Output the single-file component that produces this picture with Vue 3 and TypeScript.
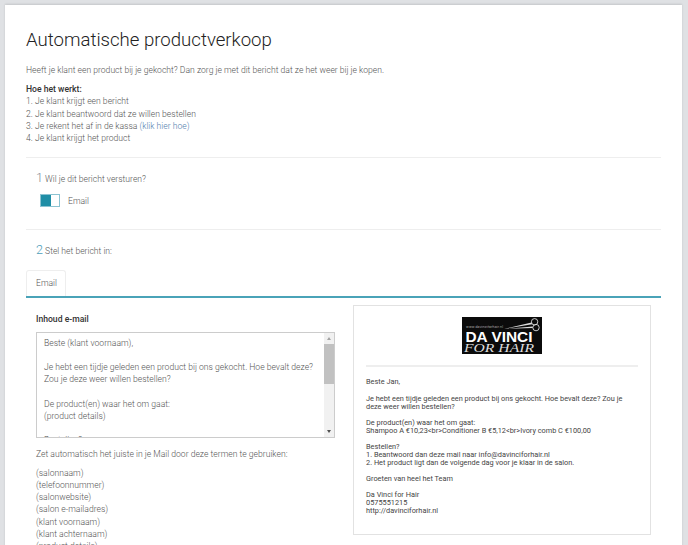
<script setup lang="ts">
const steps = [
  '1. Je klant krijgt een bericht',
  '2. Je klant beantwoord dat ze willen bestellen',
]
const terms = [
  '(salonnaam)',
  '(telefoonnummer)',
  '(salonwebsite)',
  '(salon e-mailadres)',
  '(klant voornaam)',
  '(klant achternaam)',
  '(product details)',
]
const template = `Beste (klant voornaam),

Je hebt een tijdje geleden een product bij ons gekocht. Hoe bevalt deze?
Zou je deze weer willen bestellen?

De product(en) waar het om gaat:
(product details)

Bestellen?`
const mail = `Beste Jan,

Je hebt een tijdje geleden een product bij ons gekocht. Hoe bevalt deze? Zou je deze weer willen bestellen?

De product(en) waar het om gaat:
Shampoo A €10,23<br>Conditioner B €5,12<br>Ivory comb C €100,00

Bestellen?
1. Beantwoord dan deze mail naar info@davinciforhair.nl
2. Het product ligt dan de volgende dag voor je klaar in de salon.

Groeten van heel het Team

Da Vinci for Hair
0575551215
http://davinciforhair.nl`
</script>

<template>
  <div class="page">
    <div class="card">
      <h1 class="title">Automatische productverkoop</h1>
      <p class="intro">Heeft je klant een product bij je gekocht? Dan zorg je met dit bericht dat ze het weer bij je kopen.</p>
      <div class="how">
        <strong>Hoe het werkt:</strong>
        <div v-for="s in steps" :key="s">{{ s }}</div>
        <div>3. Je rekent het af in de kassa <a class="link">(klik hier hoe)</a></div>
        <div>4. Je klant krijgt het product</div>
      </div>

      <section class="step first">
        <div class="step-title"><span class="num">1</span> Wil je dit bericht versturen?</div>
        <div class="channel">
          <span class="toggle"><span class="toggle-on"></span></span>
          <span>Email</span>
        </div>
      </section>

      <section class="step second">
        <div class="step-title"><span class="num blue">2</span> Stel het bericht in:</div>
      </section>

      <div class="tabs"><span class="tab">Email</span></div>

      <div class="columns">
        <div class="editor">
          <div class="label">Inhoud e-mail</div>
          <div class="textarea">
            <div class="textarea-text">{{ template }}</div>
            <div class="scrollbar">
              <span class="arrow up"></span>
              <span class="thumb"></span>
              <span class="arrow down"></span>
            </div>
          </div>
          <p class="hint">Zet automatisch het juiste in je Mail door deze termen te gebruiken:</p>
          <div v-for="t in terms" :key="t">{{ t }}</div>
        </div>

        <div class="preview">
          <div class="logo-row">
            <svg class="logo" width="80" height="37" viewBox="0 0 80 37">
              <rect width="80" height="37" fill="#0b0b0b" />
              <text x="4" y="11" font-size="3.6" fill="#ddd" font-family="Roboto, sans-serif" textLength="37">www.davinciforhair.nl</text>
              <text x="3.5" y="24.5" font-size="15" font-weight="700" fill="#fff" font-family="'Liberation Sans', sans-serif" textLength="67" lengthAdjust="spacingAndGlyphs">DA VINCI</text>
              <text x="2" y="35" font-size="13" font-style="italic" fill="#ddd" font-family="'Liberation Serif', serif" textLength="70" lengthAdjust="spacingAndGlyphs">FOR HAIR</text>
              <g fill="#ddd">
                <path d="M42 12 L69.5 5.5 L70.2 7.2 Z" />
                <path d="M42 12 L70.5 9.6 L70.8 11 Z" />
              </g>
              <g fill="none" stroke="#ddd" stroke-width="0.9">
                <circle cx="72.6" cy="4.8" r="3.2" />
                <circle cx="74" cy="10.6" r="3.2" />
              </g>
            </svg>
          </div>
          <div class="preview-text">{{ mail }}</div>
        </div>
      </div>
    </div>
  </div>
</template>

<style>
html, body {
  margin: 0;
  height: 100%;
  overflow: hidden;
  background: #dfe1e4;
}
</style>

<style scoped>
.page {
  padding: 5px 6px 0 5px;
  font-family: Roboto, sans-serif;
  font-weight: 300;
  font-size: 8.6px;
  line-height: 12.2px;
  color: #555;
}
.card {
  background: #fff;
  padding: 23px 21px 40px;
  box-shadow: 0 -1px 2px rgba(0, 0, 0, 0.12);
}
.title {
  margin: 0;
  font-size: 18.6px;
  font-weight: 300;
  line-height: 24px;
  color: #222;
}
.intro {
  margin: 12px 0 0;
}
.how {
  margin-top: 7px;
  padding-bottom: 13px;
}
.how strong, .label {
  font-weight: 500;
  color: #333;
}
.link {
  color: #4f7cac;
}
.step {
  border-top: 1px solid #eeeeee;
  padding: 13px 10px 0;
}
.first {
  height: 72px;
  box-sizing: border-box;
}
.second {
  height: 41px;
  box-sizing: border-box;
}
.step-title {
  line-height: 14px;
}
.num {
  font-size: 12.5px;
  color: #7f8a96;
}
.num.blue {
  color: #4d9dba;
}
.channel {
  display: flex;
  align-items: center;
  gap: 8px;
  margin: 8px 0 0 4px;
}
.toggle {
  display: flex;
  width: 20px;
  height: 13px;
  box-sizing: border-box;
  border: 1px solid #8cc3d2;
}
.toggle-on {
  width: 10px;
  background: #1f8ea6;
}
.tabs {
  display: flex;
  border-bottom: 2px solid #4aa3b8;
}
.tab {
  padding: 6px 8px 7px 9px;
  border: 1px solid #eeeeee;
  border-bottom: none;
  border-radius: 3px 3px 0 0;
}
.columns {
  display: flex;
  gap: 18px;
  padding: 7px 10px 0;
}
.editor {
  width: 299px;
  padding-top: 8px;
}
.label {
  margin-bottom: 6px;
}
.textarea {
  display: flex;
  height: 106px;
  box-sizing: border-box;
  border: 1px solid #ccc;
  overflow: hidden;
}
.textarea-text {
  flex: 1;
  padding: 4px 7px;
  white-space: pre-line;
}
.scrollbar {
  width: 10px;
  background: #f1f1f1;
  display: flex;
  flex-direction: column;
  align-items: center;
  padding: 4px 0;
  box-sizing: border-box;
}
.thumb {
  width: 100%;
  height: 40px;
  margin-top: 4px;
  background: #c1c1c1;
}
.arrow {
  width: 0;
  height: 0;
  border-left: 2.5px solid transparent;
  border-right: 2.5px solid transparent;
}
.arrow.up {
  border-bottom: 3px solid #a3a3a3;
}
.arrow.down {
  margin-top: auto;
  border-top: 3px solid #505050;
}
.hint {
  margin: 10px 0 7px;
}
.preview {
  width: 298px;
  height: 230px;
  box-sizing: border-box;
  border: 1px solid #e2e2e2;
  padding: 11px 12px 0;
}
.logo-row {
  display: flex;
  justify-content: center;
  padding-bottom: 11px;
  border-bottom: 2px solid #eeeeee;
}
.logo {
  display: block;
}
.preview-text {
  margin-top: 11px;
  font-size: 7.35px;
  font-weight: 400;
  line-height: 8.05px;
  color: #444;
  white-space: pre-line;
}
</style>
